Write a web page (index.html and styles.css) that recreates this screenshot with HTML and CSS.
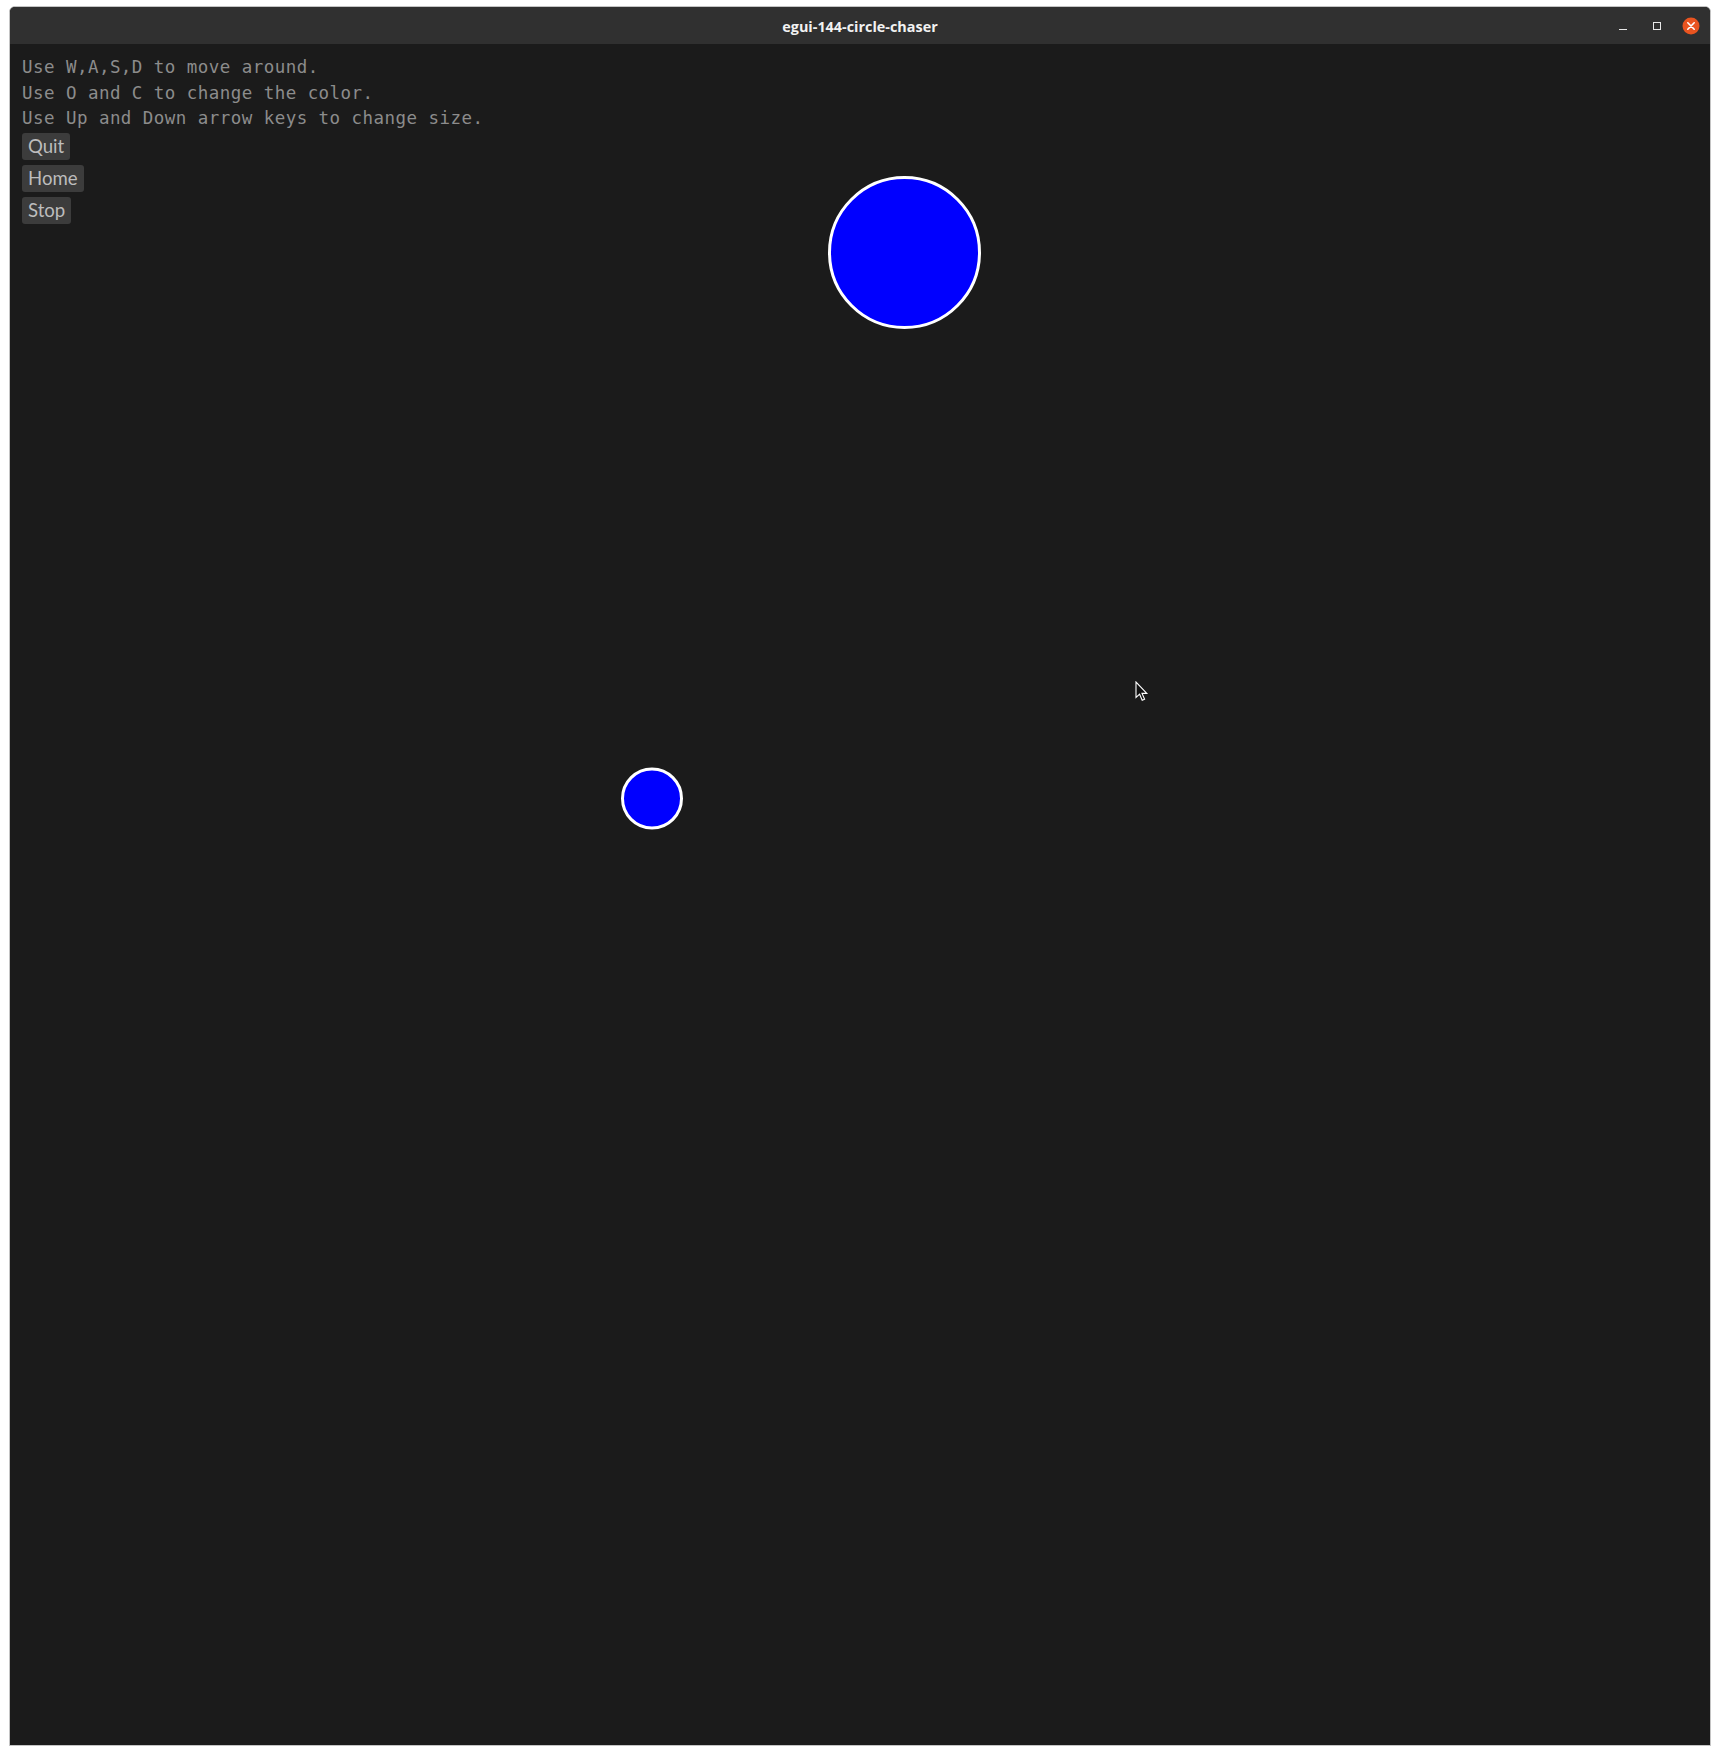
FILE: index.html
```html
<!DOCTYPE html>
<html>
<head>
<meta charset="utf-8">
<title>egui-144-circle-chaser</title>
<link rel="stylesheet" href="styles.css">
</head>
<body>
<div class="window">
  <header class="titlebar">
    <span class="title">egui-144-circle-chaser</span>
    <div class="controls">
      <span class="ctl min"></span>
      <span class="ctl max"></span>
      <span class="ctl close">
        <svg width="18" height="18" viewBox="0 0 18 18"><circle cx="9" cy="9" r="8.5" fill="#e95420"/><path d="M5.8 5.8 L12.2 12.2 M12.2 5.8 L5.8 12.2" stroke="#fff" stroke-width="1.6" stroke-linecap="round"/></svg>
      </span>
    </div>
  </header>
  <main class="content">
    <div class="panel">
      <p class="line">Use W,A,S,D to move around.</p>
      <p class="line">Use O and C to change the color.</p>
      <p class="line">Use Up and Down arrow keys to change size.</p>
      <div class="buttons">
        <button class="btn">Quit</button>
        <button class="btn">Home</button>
        <button class="btn">Stop</button>
      </div>
    </div>
    <svg class="canvas" width="1700" height="1701" viewBox="0 0 1700 1701">
      <circle cx="894.5" cy="208.5" r="75" fill="#0000ff" stroke="#ffffff" stroke-width="3"/>
      <circle cx="642" cy="754.5" r="29.5" fill="#0000ff" stroke="#ffffff" stroke-width="3"/>
    </svg>
    <svg class="cursor" width="14" height="22" viewBox="0 0 14 22">
      <path d="M1 1 L1 16.5 L4.6 13.2 L7.2 19.2 L9.6 18.2 L7 12.4 L11.8 12.4 Z" fill="#111" stroke="#fff" stroke-width="1.1" stroke-linejoin="miter"/>
    </svg>
  </main>
</div>
</body>
</html>
```
FILE: styles.css
```css
html, body {
  margin: 0;
  padding: 0;
  background: #ffffff;
}
body {
  padding: 6px 0 0 9px;
}
.window {
  width: 1700px;
  border: 1px solid #c4c4c4;
  border-radius: 6px 6px 0 0;
  overflow: hidden;
  background: #1b1b1b;
}
.titlebar {
  box-sizing: border-box;
  height: 37px;
  padding-top: 2px;
  background: #303030;
  display: flex;
  align-items: center;
  justify-content: center;
  position: relative;
}
.title {
  font-family: "Open Sans", "Noto Sans", sans-serif;
  font-weight: 700;
  font-size: 14.4px;
  color: #f2f2f2;
  letter-spacing: 0;
}
.controls {
  position: absolute;
  right: 10px;
  top: 2px;
  height: 35px;
  display: flex;
  align-items: center;
}
.ctl {
  display: block;
}
.min {
  width: 8px;
  height: 1px;
  background: #e8e8e8;
  margin-top: 6px;
  margin-right: 26px;
}
.max {
  width: 6px;
  height: 6px;
  border: 1px solid #e8e8e8;
  margin-right: 21px;
  margin-top: -1px;
}
.close {
  width: 18px;
  height: 18px;
  margin-top: -1px;
}
.close svg {
  display: block;
}
.content {
  position: relative;
  height: 1701px;
}
.panel {
  padding: 11px 0 0 12px;
  display: flex;
  flex-direction: column;
  align-items: flex-start;
}
.line {
  margin: 0;
  font-family: "DejaVu Sans Mono", "Liberation Mono", monospace;
  font-size: 17.5px;
  letter-spacing: 0.45px;
  line-height: 25.5px;
  color: #8c8c8c;
  white-space: pre;
}
.buttons {
  margin-top: 1px;
  display: flex;
  flex-direction: column;
  align-items: flex-start;
  gap: 5px;
}
.btn {
  font-family: Lato, "Open Sans", sans-serif;
  font-weight: 400;
  font-size: 18.6px;
  line-height: 19px;
  padding: 4px 6px;
  background: #3c3c3c;
  color: #bdbdbd;
  border: none;
  border-radius: 3px;
  margin: 0;
}
.canvas {
  position: absolute;
  left: 0;
  top: 0;
  pointer-events: none;
}
.cursor {
  position: absolute;
  left: 1125px;
  top: 637px;
}
```
